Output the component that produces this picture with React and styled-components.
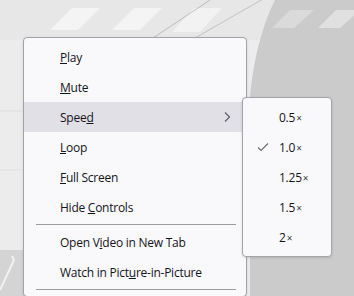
import React from "react";
import styled, { createGlobalStyle } from "styled-components";

const speeds = ["0.5", "1.0", "1.25", "1.5", "2"];
const current = "1.0";

const App = () => {
  return (
    <Stage>
      <GlobalStyle />
      <VideoFrame />
      <Menu>
        <Item><Label><Key>P</Key>lay</Label></Item>
        <Item><Label><Key>M</Key>ute</Label></Item>
        <Item active>
          <Label>Spee<Key>d</Key></Label>
          <Chevron />
        </Item>
        <Item><Label><Key>L</Key>oop</Label></Item>
        <Item><Label><Key>F</Key>ull Screen</Label></Item>
        <Item><Label>Hide <Key>C</Key>ontrols</Label></Item>
        <Separator />
        <Item><Label>Open V<Key>i</Key>deo in New Tab</Label></Item>
        <Item><Label>Watch in Pict<Key>u</Key>re-in-Picture</Label></Item>
        <Separator />
      </Menu>
      <SubMenu>
        {speeds.map((s) => (
          <Item key={s}>
            {s === current && <Check />}
            <Label>
              {s}
              <Times>×</Times>
            </Label>
          </Item>
        ))}
      </SubMenu>
    </Stage>
  );
};

const VideoFrame = () => (
  <Backdrop viewBox="0 0 354 296" preserveAspectRatio="none">
    <rect width="354" height="296" fill="#ececec" />
    <path d="M0 0 H354 V40 H0 Z" fill="#e7e7e7" />
    <path d="M50 30 L72 8 H100 L78 30 Z" fill="#f4f4f4" />
    <path d="M112 30 L134 8 H162 L140 30 Z" fill="#f4f4f4" />
    <path d="M172 32 L194 8 H222 L200 32 Z" fill="#f2f2f2" />
    <path d="M275 0 C250 50 245 120 250 170 L250 296 H354 V0 Z" fill="#cbcbcb" />
    <path d="M318 28 L336 10 H360 L340 28 Z" fill="#e0e0e0" />
    <path d="M272 28 L290 10 H314 L294 28 Z" fill="#dadada" />
    <path d="M0 250 H30 V296 H0 Z" fill="#d4d4d4" />
    <path d="M0 290 L14 260 L12 256" stroke="#f2f2f2" strokeWidth="2" fill="none" />
    <path d="M150 40 L210 0" stroke="#a0a0a0" strokeWidth="0.6" />
    <path d="M195 38 L270 -5" stroke="#a8a8a8" strokeWidth="0.6" />
    <path d="M0 111 H22" stroke="#dddddd" strokeWidth="1" />
    <path d="M0 170 H22" stroke="#e0e0e0" strokeWidth="1" />
  </Backdrop>
);

const Chevron = () => (
  <ChevronIcon viewBox="0 0 10 12" width="10" height="12">
    <path d="M3 1.5 L7.5 6 L3 10.5" fill="none" stroke="#5b5b66" strokeWidth="1.1" />
  </ChevronIcon>
);

const Check = () => (
  <CheckIcon viewBox="0 0 12 10" width="12" height="10">
    <path d="M1 5.5 L4 8.5 L11 1.5" fill="none" stroke="#6b6b73" strokeWidth="1.1" />
  </CheckIcon>
);

const GlobalStyle = createGlobalStyle`
  html, body {
    margin: 0;
    padding: 0;
    overflow: hidden;
  }
  body {
    font-family: "Open Sans", "Noto Sans", sans-serif;
  }
`;

const Stage = styled.div`
  position: relative;
  width: 354px;
  height: 296px;
  overflow: hidden;
`;

const Backdrop = styled.svg`
  display: block;
  width: 354px;
  height: 296px;
`;

const Menu = styled.div`
  position: absolute;
  left: 23px;
  top: 37px;
  width: 222px;
  padding: 4px 0;
  background: #f9f9fb;
  border: 1px solid #a3a3a8;
  border-radius: 4px;
  box-shadow: 0 1px 3px rgba(0, 0, 0, 0.12);
`;

const SubMenu = styled(Menu)`
  left: 242px;
  top: 97px;
  width: 88px;
`;

const Item = styled.div`
  position: relative;
  display: flex;
  align-items: center;
  height: 30px;
  padding-left: 36px;
  font-size: 12px;
  letter-spacing: -0.25px;
  color: #15141a;
  background: ${({ active }) => (active ? "#e0e0e6" : "transparent")};
  white-space: nowrap;
`;

const Label = styled.span`
  white-space: pre;
`;

const Key = styled.span`
  text-decoration: underline;
  text-underline-offset: 1px;
`;

const Times = styled.span`
  font-size: 10px;
  margin-left: 1px;
  color: #3a3942;
`;

const Separator = styled.div`
  height: 1px;
  margin: 2px 10px 2px 12px;
  background: #9b9ba0;
`;

const ChevronIcon = styled.svg`
  position: absolute;
  right: 14px;
  top: 9px;
`;

const CheckIcon = styled.svg`
  position: absolute;
  left: 14px;
  top: 10px;
`;

export default App;
